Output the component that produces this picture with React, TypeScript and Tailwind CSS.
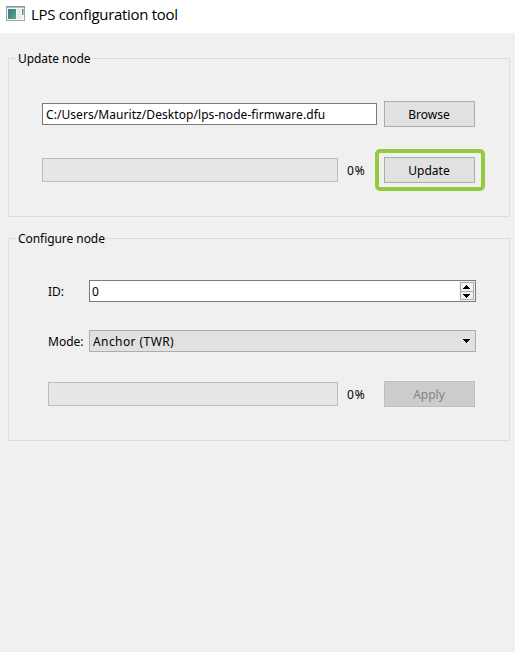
import type { ReactNode } from "react";

const Group = ({ title, titleClass, className, children }: { title: string; titleClass: string; className: string; children: ReactNode }) => (
  <section className={`relative ml-2 w-[502px] border border-[#dcdcdc] ${className}`}>
    <h2 className={`absolute -top-2 left-[7px] h-4 whitespace-nowrap bg-[#f0f0f0] pl-0.5 leading-4 ${titleClass}`}>{title}</h2>
    {children}
  </section>
);

const Progress = ({ className }: { className: string }) => (
  <div className={`h-6 shrink-0 border border-[#bcbcbc] bg-[#e6e6e6] ${className}`} />
);

const PushButton = ({ label, disabled = false }: { label: string; disabled?: boolean }) => (
  <button
    disabled={disabled}
    className={`flex h-[26px] w-[91px] shrink-0 items-center justify-center border pr-px pt-px ${
      disabled ? "border-[#bfbfbf] bg-[#cccccc] text-[#838383]" : "border-[#adadad] bg-[#e1e1e1]"
    }`}
  >
    {label}
  </button>
);

const Arrow = ({ up = false }: { up?: boolean }) => (
  <svg width="7" height="4" viewBox="0 0 7 4" shapeRendering="crispEdges" className="block">
    <path d={up ? "M3 0h1v1h1v1h1v1h1v1H0V3h1V2h1V1h1z" : "M0 0h7v1H6v1H5v1H4v1H3V3H2V2H1V1H0z"} />
  </svg>
);

const AppIcon = () => (
  <svg width="19" height="16" viewBox="0 0 19 16" className="block">
    <defs>
      <linearGradient id="pane" x1="0" y1="0" x2="1" y2="1">
        <stop offset="0" stopColor="#4574a0" />
        <stop offset="0.55" stopColor="#459183" />
        <stop offset="1" stopColor="#60ad78" />
      </linearGradient>
      <linearGradient id="side" x1="0" y1="0" x2="0" y2="1">
        <stop offset="0" stopColor="#497ba3" />
        <stop offset="1" stopColor="#67b082" />
      </linearGradient>
    </defs>
    <rect x="0.5" y="0.5" width="18" height="14" fill="#f3f4f5" stroke="#a0a6ac" />
    <path d="M0 0.8h19" stroke="#8a929b" strokeWidth="1.6" />
    <rect x="2" y="3" width="8" height="10" fill="url(#pane)" />
    <rect x="11" y="3" width="4" height="10" fill="#e7eaeb" />
    <rect x="16" y="3" width="1.5" height="6" fill="url(#side)" />
  </svg>
);

export default function App() {
  return (
    <main className="h-[652px] w-[515px] overflow-hidden bg-[#f0f0f0] font-['Noto_Sans',sans-serif] text-[12px] text-black">
      <header className="flex h-[33px] items-start bg-white pl-1.5 pt-1.5">
        <AppIcon />
        <h1 className="-mt-0.5 ml-1.5 whitespace-nowrap font-['Open_Sans',sans-serif] text-[15px] leading-5 tracking-[-0.31px]">LPS configuration tool</h1>
      </header>

      <Group title="Update node" titleClass="w-[76px] tracking-[-0.08px]" className="mt-[25px] h-[159px] pl-[33px] pt-[42px]">
        <div className="flex h-[26px] items-center">
          <div className="flex h-[22px] w-[335px] items-center whitespace-nowrap border border-[#7a7a7a] bg-white pl-[3px] pt-[2px] tracking-[0.065px]">
            C:/Users/Mauritz/Desktop/lps-node-firmware.dfu
          </div>
          <div className="ml-[7px]"><PushButton label="Browse" /></div>
        </div>
        <div className="mt-[22px] flex h-[42px] items-center">
          <Progress className="w-[296px]" />
          <span className="ml-[9px] w-[28px] pt-[2px] tracking-[0.8px]">0%</span>
          <div className="flex h-[42px] w-[110px] items-center rounded-[5px] border-4 border-[#97c93f] pl-[5px]">
            <PushButton label="Update" />
          </div>
        </div>
      </Group>

      <Group title="Configure node" titleClass="w-[89px] tracking-[-0.06px]" className="mt-[21px] h-[203px] pl-[39px] pt-[41px]">
        <div className="flex h-[22px] items-center">
          <span className="w-[41px] pt-[2px]">ID:</span>
          <div className="flex h-[22px] w-[387px] items-center justify-between border border-[#7a7a7a] bg-white pl-[2px]">
            <span className="pt-[2px]">0</span>
            <div className="flex h-5 w-4 items-center bg-[#f0f0f0] pl-px">
              <div className="flex h-[18px] w-[14px] flex-col border border-[#adadad]">
                <div className="h-[9px] border-b border-[#adadad] pl-[2px] pt-[2px]"><Arrow up /></div>
                <div className="h-[7px] pl-[2px] pt-[2px]"><Arrow /></div>
              </div>
            </div>
          </div>
        </div>
        <div className="mt-7 flex h-[22px] items-center">
          <span className="w-[41px] whitespace-nowrap pt-[2px]">Mode:</span>
          <div className="flex h-[22px] w-[387px] items-center justify-between border border-[#adadad] bg-[#e1e1e1] pl-[3px] pr-[5px]">
            <span className="pt-[2px] tracking-[0.42px]">Anchor (TWR)</span>
            <Arrow />
          </div>
        </div>
        <div className="mt-[29px] flex h-[26px] items-center">
          <Progress className="w-[290px]" />
          <span className="ml-[9px] w-[37px] pt-[2px] tracking-[0.8px]">0%</span>
          <PushButton label="Apply" disabled />
        </div>
      </Group>
    </main>
  );
}
